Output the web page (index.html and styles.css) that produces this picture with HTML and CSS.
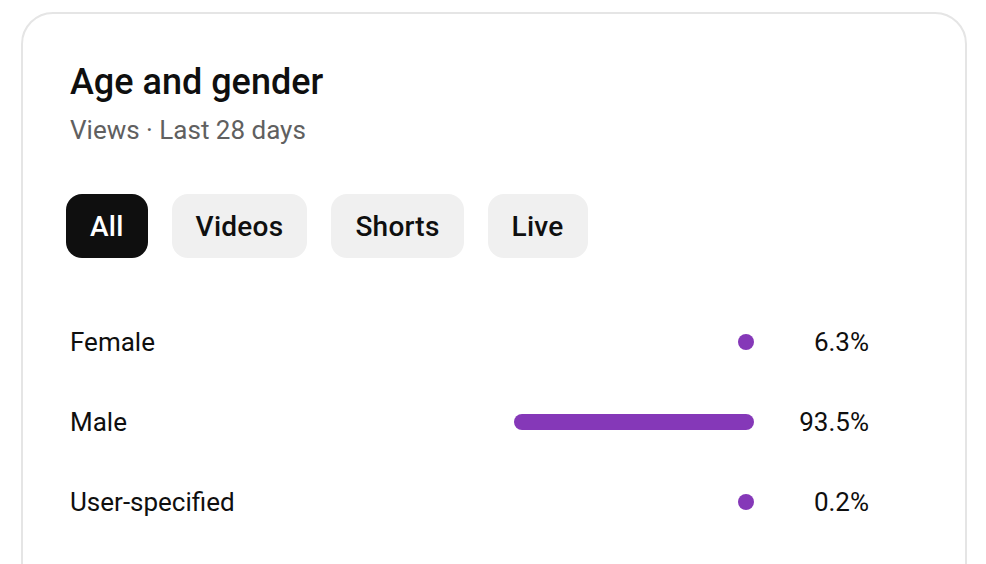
FILE: index.html
```html
<!DOCTYPE html>
<html lang="en">
<head>
<meta charset="utf-8">
<title>Age and gender</title>
<link rel="stylesheet" href="styles.css">
</head>
<body>
  <section class="card">
    <h2 class="title">Age and gender</h2>
    <p class="subtitle">Views · Last 28 days</p>
    <div class="chips">
      <button class="chip chip-active">All</button>
      <button class="chip">Videos</button>
      <button class="chip">Shorts</button>
      <button class="chip">Live</button>
    </div>
    <div class="rows">
      <div class="row">
        <span class="label">Female</span>
        <div class="track"><div class="bar" style="width:6.3%"></div></div>
        <span class="pct">6.3%</span>
      </div>
      <div class="row">
        <span class="label">Male</span>
        <div class="track"><div class="bar" style="width:93.5%"></div></div>
        <span class="pct">93.5%</span>
      </div>
      <div class="row">
        <span class="label">User-specified</span>
        <div class="track"><div class="bar" style="width:0.2%"></div></div>
        <span class="pct">0.2%</span>
      </div>
    </div>
  </section>
</body>
</html>
```

FILE: styles.css
```css
html, body {
  margin: 0;
  padding: 0;
  background: #ffffff;
}

body {
  font-family: Roboto, "Noto Sans", Arial, sans-serif;
  color: #0f0f0f;
  padding: 12px 19px 0 21px;
  overflow: hidden;
}

.card {
  border: 2px solid #e5e5e5;
  border-radius: 32px;
  padding: 46px 48px 0 47px;
  height: 700px;
}

.title {
  margin: 0;
  font-size: 36px;
  line-height: 44px;
  font-weight: 500;
  color: #0f0f0f;
}

.subtitle {
  margin: 10px 0 0;
  font-size: 26px;
  line-height: 32px;
  color: #606060;
}

.chips {
  display: flex;
  gap: 24px;
  margin-top: 48px;
  margin-left: -4px;
}

.chip {
  height: 64px;
  padding: 0 24px;
  border: none;
  border-radius: 16px;
  background: #f0f0f0;
  color: #0f0f0f;
  font-family: Roboto, "Noto Sans", Arial, sans-serif;
  font-size: 28px;
  font-weight: 500;
  letter-spacing: 0.25px;
}

.chip-active {
  background: #0f0f0f;
  color: #ffffff;
}

.rows {
  display: flex;
  flex-direction: column;
  margin-top: 44px;
  margin-right: 48px;
}

.row {
  display: grid;
  grid-template-columns: 1fr 257px 115px;
  align-items: center;
  height: 80px;
}

.label {
  font-size: 26px;
  line-height: 32px;
}

.track {
  display: flex;
  justify-content: flex-end;
  height: 16px;
}

.bar {
  min-width: 16px;
  height: 16px;
  border-radius: 8px;
  background: #8538b8;
}

.pct {
  text-align: right;
  font-size: 26px;
  line-height: 32px;
}
```
